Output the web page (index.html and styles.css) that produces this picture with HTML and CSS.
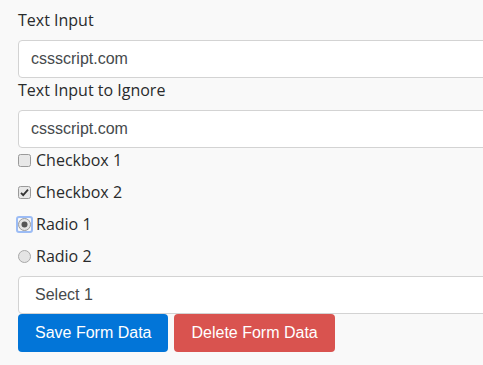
FILE: index.html
```html
<!DOCTYPE html>
<html lang="en">
	<head>
		<meta charset="UTF-8" />
		<meta name="viewport" content="width=device-width, initial-scale=1.0" />
		<title>Form Storage Demo</title>
		<link rel="stylesheet" href="styles.css">
	</head>
	<body>
		<div class="container">
			<form id="demo-form">
				<div class="form-group">
					<label for="text-input">Text Input</label>
					<input type="text" id="text-input" class="form-control" value="cssscript.com" />
				</div>
				<div class="form-group">
					<label for="text-ignore">Text Input to Ignore</label>
					<input type="text" id="text-ignore" class="form-control" value="cssscript.com" />
				</div>

				<label class="check-row">
					<svg class="box" width="13" height="13" viewBox="0 0 13 13">
						<rect x="0.5" y="0.5" width="12" height="12" rx="2" fill="#e8e8e8" stroke="#9a9a9a" />
					</svg>
					Checkbox 1
				</label>
				<label class="check-row">
					<svg class="box" width="13" height="13" viewBox="0 0 13 13">
						<rect x="0.5" y="0.5" width="12" height="12" rx="2" fill="#e8e8e8" stroke="#9a9a9a" />
						<path d="M3 6.8 L5.2 9.2 L10 3.6" fill="none" stroke="#333" stroke-width="1.8" />
					</svg>
					Checkbox 2
				</label>
				<label class="check-row">
					<span class="focus-ring">
						<svg width="13" height="13" viewBox="0 0 13 13">
							<circle cx="6.5" cy="6.5" r="6" fill="#e4e4e4" stroke="#9a9a9a" />
							<circle cx="6.5" cy="6.5" r="3" fill="#555" />
						</svg>
					</span>
					Radio 1
				</label>
				<label class="check-row">
					<svg class="box" width="13" height="13" viewBox="0 0 13 13">
						<circle cx="6.5" cy="6.5" r="6" fill="#e4e4e4" stroke="#a8a8a8" />
					</svg>
					Radio 2
				</label>

				<div class="form-control select-box">Select 1</div>

				<div class="actions">
					<button type="button" class="btn btn-primary">Save Form Data</button>
					<button type="button" class="btn btn-danger">Delete Form Data</button>
				</div>
			</form>
		</div>
	</body>
</html>
```

FILE: styles.css
```css
html, body {
	overflow: hidden;
}
body {
	margin: 0;
	background-color: #f9f9f9;
	font-family: "Open Sans", "Segoe UI", sans-serif;
	font-size: 16px;
	line-height: 1.5;
	color: #292b2c;
}
.container {
	width: 560px;
	padding: 8px 18px;
}
.form-group label {
	display: block;
	margin-bottom: 8px;
}
.form-control {
	display: block;
	box-sizing: border-box;
	width: 100%;
	height: 38px;
	padding: 8px 12px;
	font-family: "Liberation Sans", Arial, sans-serif;
	font-size: 16px;
	line-height: 1.25;
	color: #464a4c;
	background-color: #fff;
	border: 1px solid #d3d3d3;
	border-radius: 4px;
	margin: 0;
}
.check-row {
	display: flex;
	align-items: center;
	height: 24px;
	margin-bottom: 8px;
}
.check-row .box {
	margin-right: 5px;
	flex-shrink: 0;
}
.focus-ring {
	display: flex;
	margin: -2px 3px -2px -2px;
	border: 2px solid #9cbcf5;
	border-radius: 3px;
}
.select-box {
	padding-left: 16px;
}
.actions {
	display: flex;
	gap: 6px;
}
.btn {
	height: 38px;
	padding: 0 17px;
	font-family: "Liberation Sans", Arial, sans-serif;
	font-size: 16px;
	color: #fff;
	border: none;
	border-radius: 4px;
	cursor: pointer;
}
.btn-primary {
	background-color: #0275d8;
}
.btn-danger {
	background-color: #d9534f;
}
```
